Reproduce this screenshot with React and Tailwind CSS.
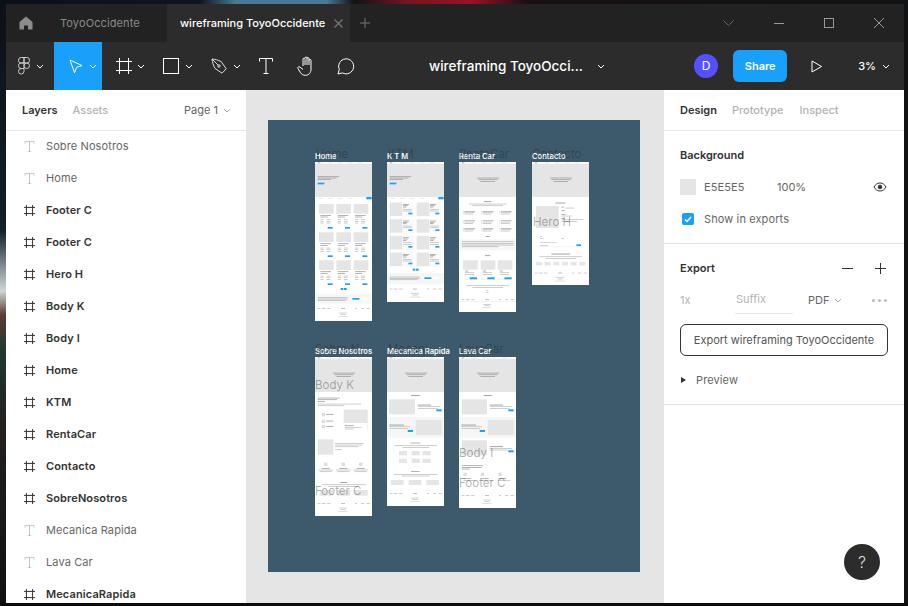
import React from "react";

const G = "#e5e5e5", B = "#18a0fb", L = "#bcbcbc", D = "#9a9a9a", P = "#f6f6f6";
const box = (x, y, w, h, f = G) => ({ x, y, w, h, f });
const line = (x, y, w, f = L) => box(x, y, w, 2.2, f);

const top = (leftText = false) => [
  box(0, 5, 172, 100, G),
  line(8, 1.5, 8, "#999"), line(40, 1.5, 10, "#ddd"), line(70, 1.5, 10, "#ddd"), line(100, 1.5, 10, "#ddd"), line(130, 1.5, 10, "#ddd"),
  ...(leftText
    ? [line(8, 43, 64, D), line(8, 47, 56, D), line(8, 51, 40, D), box(8, 62, 20, 5, B)]
    : [line(54, 47, 66, D), line(58, 52, 58, D), line(64, 57, 44, D)]),
];
const navStrip = [
  line(10, 108, 12, "#cfe8fb"), line(40, 108, 12, "#cfe8fb"), line(70, 108, 12, "#cfe8fb"), line(100, 108, 12, "#cfe8fb"),
  box(154, 105, 16, 7, B),
];
const foot = (y) => [
  line(8, y, 8), line(20, y, 12), line(36, y, 10), line(78, y, 12, "#aaa"), line(120, y, 6), line(138, y, 10), line(155, y, 10),
  line(72, y + 14, 24, "#c4c4c4"), line(76, y + 18, 16, "#c4c4c4"), line(70, y + 24, 28, "#d4d4d4"),
];
const banner = (y, h) => [
  box(0, y, 172, h, P),
  line(8, y + 11, 90, "#b4b4b4"), line(8, y + 15, 90, "#b4b4b4"), line(8, y + 19, 84, "#b4b4b4"),
  box(112, y + 13, 21, 5, B), box(137, y + 13, 19, 5, "#fff"),
];
const pager = (y) => [box(77, y, 8, 6, B), box(87, y, 8, 6, B)];

const homeCards = [126, 211, 295].flatMap((y) =>
  [12, 64, 116].flatMap((x) => [
    box(x, y, 44, 29),
    line(x + 4, y + 33, 32, "#999"), line(x + 4, y + 38, 22, "#999"),
    line(x + 4, y + 46, 10), line(x + 22, y + 46, 12), line(x + 4, y + 51, 10), line(x + 22, y + 51, 12), line(x + 4, y + 56, 10), line(x + 22, y + 56, 12),
    box(x + 26, y + 69, 15, 5, B),
  ])
);
const ktmCards = [120, 170, 220, 270].flatMap((y) =>
  [8, 89].flatMap((x) => [
    box(x, y, 74, 44, "#fafafa"), box(x, y + 2, 38, 40),
    line(x + 40, y + 6, 18, "#999"), line(x + 40, y + 10, 14, "#999"), line(x + 40, y + 14, 10, "#999"),
    line(x + 40, y + 21, 26), line(x + 40, y + 26, 26),
    box(x + 56, y + 32, 12, 5, B),
  ])
);
const rentaList = [146, 174, 197].flatMap((y) =>
  [12, 67, 122].flatMap((x) => [
    box(x, y, 1.5, 11, "#ccc"), line(x + 4, y + 1, 32, "#aaa"), line(x + 4, y + 5, 30), line(x + 4, y + 9, 26),
  ])
);
const threeCards = (xs, y, w, h) => xs.map((x) => box(x, y, w, h));

const renta = [
  ...top(), line(75, 118, 22, "#888"), line(30, 125, 112), line(40, 130, 92), ...rentaList,
  line(80, 222, 12, "#888"),
  box(0, 232, 172, 33, P), line(8, 238, 156, "#b4b4b4"), line(8, 243, 156, "#b4b4b4"), line(8, 248, 156, "#b4b4b4"), line(8, 253, 110, "#b4b4b4"),
  line(78, 280, 16, "#888"),
  ...threeCards([12, 65, 116], 295, 44, 28),
  ...[12, 65, 116].flatMap((x) => [line(x + 6, 326, 10, "#999"), line(x + 6, 331, 28), line(x + 6, 336, 28), box(x + 20, 346, 22, 6, B), box(x, 353, 44, 1, "#ddd")]),
  line(22, 370, 128), line(40, 375, 92), line(82, 385, 6), line(82, 390, 6),
  ...foot(412), box(0, 419, 172, 1, "#ddd"),
];
const contacto = [
  ...top(),
  line(70, 122, 30, "#888"), box(12, 132, 68, 66),
  line(88, 134, 8, "#999"), line(100, 137, 26), line(88, 145, 10, "#999"), line(88, 156, 12, "#999"), line(88, 161, 32), line(88, 168, 10, "#999"), line(88, 172, 66), line(88, 177, 48),
  line(24, 222, 4, "#999"), line(24, 228, 10), line(88, 228, 8), line(24, 240, 50, "#ccc"), line(24, 250, 24),
  box(133, 247, 14, 5, B), box(24, 252, 124, 0.8, "#ddd"),
  line(58, 275, 56, "#888"), line(22, 283, 128), line(40, 288, 92),
  ...threeCards([12, 38, 64, 90, 116, 142], 300, 18, 10),
  ...foot(332),
];
const sobre = [
  ...top(), line(8, 122, 66, "#999"), line(8, 127, 58, "#999"), line(8, 132, 22, "#999"), line(8, 140, 130), line(8, 145, 80),
  ...[172, 192, 208].flatMap((y) => [box(20, y - 4, 10, 10, "#ddd"), line(33, y - 1, 22, "#999")]),
  box(86, 158, 72, 40), box(156, 198, 1, 24, "#ddd"), line(90, 205, 26, "#999"), line(90, 210, 50), line(90, 215, 26),
  box(8, 247, 47, 46), line(60, 258, 86), line(60, 263, 82), line(60, 268, 70), line(60, 276, 20),
  ...[32, 85, 137].flatMap((x) => [box(x - 5, 317, 10, 10, "#ddd"), line(x - 12, 333, 24, "#999"), line(x - 22, 338, 44), line(x - 18, 343, 36)]),
  line(76, 375, 20, "#888"), line(20, 382, 132), line(40, 387, 92),
  ...threeCards([14, 66, 118], 399, 40, 17),
  ...foot(438),
];
const band = (y) => [
  box(0, y, 172, 62, P), box(86, y + 9, 78, 45),
  line(7, y + 23, 44, "#888"), line(7, y + 28, 62), line(7, y + 33, 56), box(62, y + 39, 16, 6, B),
];
const mec = [
  ...top(), line(72, 114, 26, "#888"), box(6, 127, 78, 45),
  line(92, 143, 40, "#888"), line(92, 148, 68), line(92, 153, 60), box(148, 157, 16, 6, B),
  ...band(180),
  line(70, 257, 30, "#999"), line(22, 265, 128), line(46, 270, 80),
  ...[36, 74, 107].flatMap((x) => [box(x, 282, 24, 13), box(x, 305, 24, 13)]),
  line(72, 342, 26, "#999"), line(20, 351, 132), line(44, 356, 84),
  ...threeCards([12, 65, 118], 369, 38, 15),
  ...foot(408),
];
const lava = [
  ...top(), line(74, 114, 24, "#888"), box(8, 127, 76, 45),
  line(92, 143, 40, "#888"), line(92, 148, 68), line(92, 153, 60), box(148, 157, 16, 6, B),
  ...band(180),
  box(8, 250, 76, 45), line(92, 268, 40, "#888"), line(92, 273, 68), line(92, 278, 54), box(148, 280, 16, 6, B),
  line(8, 325, 64, "#999"), line(8, 330, 60, "#999"), line(8, 335, 24, "#999"),
  ...[13, 65, 118].flatMap((x) => [box(x, 347, 10, 10, "#ddd"), line(x, 364, 24, "#999"), line(x, 369, 36)]),
  ...foot(414),
];

const frames = [
  { label: "Home", left: 47, top: 42, h: 158.5, rects: [...top(true), ...navStrip, ...homeCards, ...pager(378), ...banner(395, 30), ...foot(438)] },
  { label: "K T M", left: 119, top: 42, h: 139.5, rects: [...top(true), ...navStrip, ...ktmCards, ...pager(320), ...banner(333, 34), ...foot(380)] },
  { label: "Renta Car", left: 191, top: 42, h: 150, rects: renta },
  { label: "Contacto", left: 264, top: 42, h: 123, rects: contacto },
  { label: "Sobre Nosotros", left: 47, top: 237, h: 159, rects: sobre },
  { label: "Mecanica Rapida", left: 119, top: 237, h: 148.5, rects: mec },
  { label: "Lava Car", left: 191, top: 237, h: 151, rects: lava },
];

const ghosts = [
  ["Home", 48, 27], ["KTM", 120, 27], ["RentaCar", 191, 27], ["Contacto", 264, 27],
  ["Sobre N", 47, 222], ["Mecani", 120, 222], ["LavaCar", 191, 222],
  ["Hero H", 265, 95], ["Body K", 47, 258], ["Body I", 191, 326], ["Footer C", 47, 364], ["Footer C", 191, 356],
];

const Frame = ({ label, left, top, h, rects }) => (
  <>
    <div className="absolute w-[57.4px] bg-white" style={{ left, top, height: h }}>
      <svg viewBox={`0 0 172 ${h * 3}`} className="block w-full h-full">
        {rects.map((r, i) => (
          <React.Fragment key={i}>
            <rect x={r.x} y={r.y} width={r.w} height={r.h} fill={r.f} />
            {i === 0 && <path d="M0 5L172 105M172 5L0 105" stroke="#eeeeee" strokeWidth="1" />}
          </React.Fragment>
        ))}
      </svg>
    </div>
    <div className="absolute text-[7.6px] leading-[10px] font-semibold text-white whitespace-nowrap" style={{ left, top: top - 10 }}>
      {label}
    </div>
  </>
);

const Chevron = ({ className = "text-white" }) => (
  <svg width="8" height="5" viewBox="0 0 8 5" fill="none" stroke="currentColor" className={className}>
    <path d="M1 1l3 3 3-3" />
  </svg>
);

const ic = { fill: "none", stroke: "currentColor", strokeWidth: 1 };

const FigmaLogo = () => (
  <svg width="12" height="18" viewBox="0 0 12 18" {...ic} className="text-[#ccc]">
    <path d="M6 .5H3.2a2.75 2.75 0 0 0 0 5.5H6zM6 .5h2.8a2.75 2.75 0 0 1 0 5.500H6zM6 6H3.2a2.75 2.75 0 0 0 0 5.500H6zM6 11.500H3.2A2.75 2.75 0 1 0 6 14.250zM11.500 8.750a2.750 2.750 0 1 1-5.500 0 2.750 2.750 0 0 1 5.500 0z" />
  </svg>
);
const Cursor = () => (
  <svg width="14" height="15" viewBox="0 0 14 15" {...ic} className="text-white">
    <path d="M1 1l12 5.600-5.400 1.700-2.100 5.400z" />
  </svg>
);
const FrameIcon = ({ size = 16, cls = "text-white" }) => (
  <svg width={size} height={size} viewBox="0 0 16 16" {...ic} strokeWidth={16 / size} className={cls}>
    <path d="M3.500 0v16M12.500 0v16M0 3.500h16M0 12.500h16" />
  </svg>
);
const Rect = () => (
  <svg width="16" height="16" viewBox="0 0 16 16" {...ic} className="text-white">
    <rect x=".5" y=".5" width="15" height="15" />
  </svg>
);
const Pen = () => (
  <svg width="16" height="16" viewBox="0 0 16 16" {...ic} className="text-[#ddd]">
    <path d="M1 1c3 .2 6 1 9.200 2.600l5 7.200-4.200 4.400-7-4.800C2.400 7.600 1.400 4.200 1 1zM1 1l6 6" />
    <circle cx="8" cy="8" r="1.200" />
  </svg>
);
const TIcon = ({ w = 14, h = 16, cls = "text-white" }) => (
  <svg width={w} height={h} viewBox="0 0 14 16" {...ic} className={cls}>
    <path d="M.5 3.500V.5h13v3M7 .5v15M4.500 15.500h5" />
  </svg>
);
const Hand = () => (
  <svg width="19" height="20" viewBox="0 0 19 20" {...ic} className="text-white">
    <path d="M6 10V3.200a1 1 0 0 1 2 0V9m0-7a1 1 0 0 1 2 0v7m0-6.400a1 1 0 0 1 2 0V9m0-4.500a1 1 0 0 1 2 0V13c0 3.500-2 6.300-5.500 6.300-2.500 0-4-1-5-2.600L1 12.500c-.7-1.300.9-2.400 1.900-1.400L6 13.500" />
  </svg>
);
const Comment = () => (
  <svg width="18" height="17" viewBox="0 0 18 17" {...ic} className="text-white">
    <path d="M1 16l1.300-4.600A7.500 7.500 0 1 1 5.500 14.900z" />
  </svg>
);

const Tool = ({ children, active, chevron = true, cls = "" }) => (
  <div className={`w-12 h-12 flex items-center gap-[6px] ${cls} ${active ? "bg-[#18a0fb]" : ""}`}>
    {children}
    {chevron && <Chevron />}
  </div>
);
const Plain = ({ children }) => <div className="w-10 h-12 flex items-center justify-center">{children}</div>;

const layers = [
  ["T", "Sobre Nosotros"], ["T", "Home"], ["F", "Footer C"], ["F", "Footer C"], ["F", "Hero H"],
  ["F", "Body K"], ["F", "Body I"], ["F", "Home"], ["F", "KTM"], ["F", "RentaCar"], ["F", "Contacto"],
  ["F", "SobreNosotros"], ["T", "Mecanica Rapida"], ["T", "Lava Car"], ["F", "MecanicaRapida"],
];

export default function App() {
  return (
    <div
      className="w-[908px] h-[606px] overflow-hidden flex pl-[6px] pt-[4px] pr-[4px] pb-[3px] text-[11px] [font-family:Inter,'Liberation_Sans',sans-serif] [background:linear-gradient(#0c0c0c,#0c0c0c)_left_bottom/100%_3px_no-repeat,linear-gradient(180deg,#0c1116_0%,#10202c_38%,#cfd6d6_48%,#5e3a30_52%,#1d3a30_58%,#24211f_70%,#101010_100%)_left_top/6px_100%_no-repeat,linear-gradient(90deg,#0a1018_0%,#0d1620_22%,#4a7896_26%,#4a7896_36%,#0f1318_39%,#7a1420_45%,#a01020_52%,#181014_58%,#101214_100%)]"
    >
      <div className="flex-1 flex flex-col min-w-0 relative overflow-hidden bg-white">
        {/* Title bar */}
        <div className="h-[38px] shrink-0 bg-[#222222] flex items-center">
          <div className="w-10 flex justify-center">
            <svg width="14" height="14" viewBox="0 0 14 14" className="text-[#8c8c8c]" fill="currentColor">
              <path d="M7 .5L.5 6v7.500h4.500V9.500h4v4h4.500V6z" />
            </svg>
          </div>
          <div className="w-[121px] pl-[14px] text-[#8a8a8a] text-[11px] tracking-[0.01em]">ToyoOccidente</div>
          <div className="w-[183px] h-full bg-[#2c2c2c] flex items-center pl-[13px] text-white font-medium text-[11px] whitespace-nowrap">
            wireframing ToyoOccidente
            <svg width="9" height="9" viewBox="0 0 9 9" stroke="currentColor" strokeWidth="1.200" className="ml-[9px] text-[#777]">
              <path d="M.5.5l8 8M8.500.5l-8 8" />
            </svg>
          </div>
          <svg width="10" height="10" viewBox="0 0 10 10" stroke="currentColor" className="ml-[10px] text-[#777]">
            <path d="M5 0v10M0 5h10" />
          </svg>
          <div className="ml-auto flex items-center text-[#999]">
            <svg width="11" height="6" viewBox="0 0 11 6" fill="none" stroke="#666" className="mr-[40px]">
              <path d="M.5.5l5 5 5-5" />
            </svg>
            <div className="w-[10px] h-px bg-[#999] mr-[40px]" />
            <div className="w-[10px] h-[10px] border border-[#999] mr-[40px]" />
            <svg width="10" height="10" viewBox="0 0 10 10" stroke="#999" className="mr-[20px]">
              <path d="M0 0l10 10M10 0L0 10" />
            </svg>
          </div>
        </div>

        {/* Toolbar */}
        <div className="h-12 shrink-0 bg-[#2c2c2c] flex items-center">
          <Tool cls="pl-[12px]"><FigmaLogo /></Tool>
          <Tool active cls="pl-[15px]"><Cursor /></Tool>
          <Tool cls="pl-[14px] !gap-[5px]"><FrameIcon /></Tool>
          <Tool cls="pl-[13px]"><Rect /></Tool>
          <Tool cls="pl-[13px]"><Pen /></Tool>
          <Plain><TIcon /></Plain>
          <Plain><Hand /></Plain>
          <Plain><Comment /></Plain>
          <div className="ml-[63px] text-white text-[13.500px] font-medium whitespace-nowrap">wireframing ToyoOcci...</div>
          <div className="ml-[14px]"><Chevron /></div>
          <div className="ml-auto flex items-center pr-[14px]">
            <div className="w-6 h-6 rounded-full bg-[#5551ff] text-white text-[12px] flex items-center justify-center">D</div>
            <div className="ml-[15px] w-[54px] h-8 rounded-md bg-[#18a0fb] text-white text-[11px] font-semibold flex items-center justify-center">Share</div>
            <svg width="12" height="13" viewBox="0 0 12 13" {...ic} className="ml-[24px] text-white">
              <path d="M1 1l9.500 5.500L1 12z" />
            </svg>
            <div className="ml-[35px] text-white text-[11px] font-medium">3%</div>
            <div className="ml-[6px]"><Chevron /></div>
          </div>
        </div>

        {/* Body */}
        <div className="flex-1 flex min-h-0">
          {/* Layers */}
          <div className="w-[240px] shrink-0 bg-white overflow-hidden">
            <div className="h-[41px] border-b border-[#e5e5e5] flex items-center pl-4 pr-[15px]">
              <span className="font-semibold text-[#333]">Layers</span>
              <span className="ml-[15px] font-medium text-[#b3b3b3]">Assets</span>
              <span className="ml-auto text-[#666]">Page 1</span>
              <span className="ml-[5px]"><Chevron className="text-[#aaa]" /></span>
            </div>
            <div className="-mt-px">
              {layers.map(([t, name], i) => (
                <div key={i} className="h-8 flex items-center">
                  <div className="w-10 pl-[18px] flex">
                    {t === "T" ? (
                      <TIcon w={11} h={11} cls="text-[#aaaaaa]" />
                    ) : (
                      <FrameIcon size={11} cls="text-[#333]" />
                    )}
                  </div>
                  <span className={t === "T" ? "text-[#666] tracking-[0.01em]" : "text-[#333] font-semibold tracking-[0.01em]"}>{name}</span>
                </div>
              ))}
            </div>
          </div>

          {/* Canvas */}
          <div className="flex-1 bg-[#e5e5e5] relative overflow-hidden">
            <div className="absolute left-[22px] top-[30px] w-[372px] h-[452px] bg-[#3d5a6c]">
              {frames.map((f) => <Frame key={f.label} {...f} />)}
              {ghosts.map(([t, l, y], i) => (
                <div key={i} className="absolute text-[11.500px] leading-[14px] text-[#1b1b1b]/35 whitespace-nowrap" style={{ left: l, top: y }}>{t}</div>
              ))}
            </div>
          </div>

          {/* Right panel */}
          <div className="w-[240px] shrink-0 bg-white">
            <div className="h-[41px] border-b border-[#e5e5e5] flex items-center pl-4 gap-[15px]">
              <span className="font-semibold text-[#333]">Design</span>
              <span className="font-medium text-[#b3b3b3]">Prototype</span>
              <span className="ml-px font-medium text-[#b3b3b3]">Inspect</span>
            </div>
            <div className="h-[113px] border-b border-[#e5e5e5] px-4 pt-[17px]">
              <div className="font-semibold text-[#333] leading-[14px]">Background</div>
              <div className="mt-[17px] h-4 flex items-center">
                <div className="w-4 h-4 bg-[#e5e5e5]" />
                <span className="ml-2 w-[73px] text-[#666] tracking-[0.01em]">E5E5E5</span>
                <span className="text-[#666]">100%</span>
                <svg width="14" height="10" viewBox="0 0 14 10" className="ml-auto mr-px text-[#333]" fill="none" stroke="currentColor">
                  <path d="M1 5c1.500-2.700 3.500-4 6-4s4.500 1.300 6 4c-1.500 2.700-3.500 4-6 4S2.500 7.700 1 5z" />
                  <circle cx="7" cy="5" r="1.800" fill="currentColor" />
                </svg>
              </div>
              <div className="mt-[16px] h-4 flex items-center">
                <div className="ml-[2px] w-3 h-3 rounded-[2px] bg-[#18a0fb] flex items-center justify-center">
                  <svg width="8" height="7" viewBox="0 0 8 7" fill="none" stroke="white" strokeWidth="1.500">
                    <path d="M1 3.500l2 2 4-4.500" />
                  </svg>
                </div>
                <span className="ml-[10px] text-[#666] tracking-[0.01em]">Show in exports</span>
              </div>
            </div>
            <div className="h-[161px] border-b border-[#e5e5e5] px-4 pt-[17px]">
              <div className="flex items-center h-[14px]">
                <span className="font-semibold text-[#333]">Export</span>
                <div className="ml-auto w-[11px] h-px bg-[#333] mr-[22px]" />
                <svg width="11" height="11" viewBox="0 0 11 11" stroke="#333" className="mr-[2px]">
                  <path d="M5.500 0v11M0 5.500h11" />
                </svg>
              </div>
              <div className="mt-[11px] h-[28px] flex items-center">
                <span className="w-[55px] text-[#b3b3b3]">1x</span>
                <span className="w-[58px] h-[28px] pl-px flex items-center text-[#b3b3b3] border-b border-[#e5e5e5]">Suffix</span>
                <span className="ml-[15px] text-[#666]">PDF</span>
                <span className="ml-[5px]"><Chevron className="text-[#aaa]" /></span>
                <div className="ml-auto flex gap-[3px] mr-[1px]">
                  <div className="w-[3px] h-[3px] rounded-full bg-[#bbb]" />
                  <div className="w-[3px] h-[3px] rounded-full bg-[#bbb]" />
                  <div className="w-[3px] h-[3px] rounded-full bg-[#bbb]" />
                </div>
              </div>
              <div className="mt-[10px] w-[208px] h-8 rounded-md border border-[#333] flex items-center justify-center text-[#555] text-[11px]">
                Export wireframing ToyoOccidente
              </div>
              <div className="mt-[16px] flex items-center h-[16px]">
                <svg width="5" height="6" viewBox="0 0 5 6" className="ml-[1px]"><path d="M0 0l5 3-5 3z" fill="#333" /></svg>
                <span className="ml-[10px] text-[#666] tracking-[0.01em]">Preview</span>
              </div>
            </div>
          </div>
        </div>

        {/* Help */}
        <div className="absolute left-[838px] top-[540px] w-9 h-9 rounded-full bg-[#2c2c2c] text-[#ddd] text-[16px] font-light flex items-center justify-center">?</div>
      </div>
    </div>
  );
}
